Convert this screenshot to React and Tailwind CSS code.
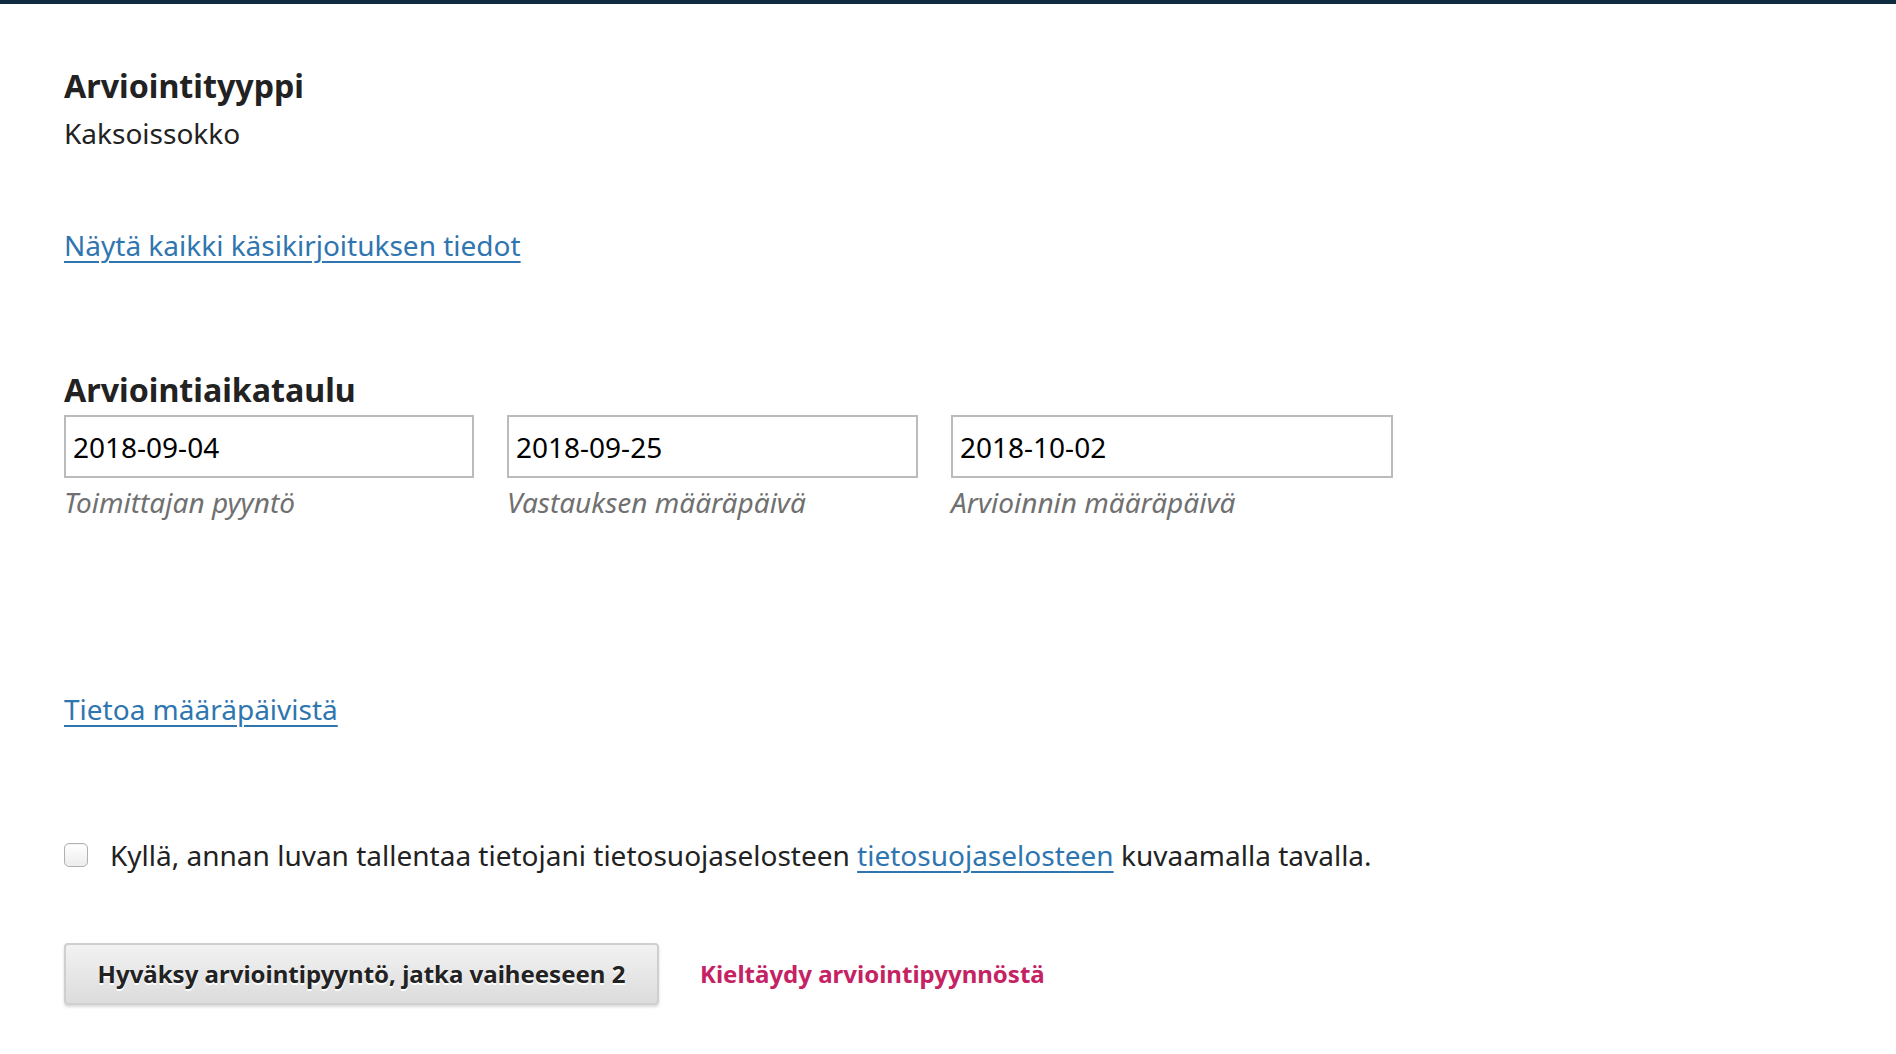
import { useState } from 'react'

const font = { fontFamily: '"Noto Sans", "Open Sans", sans-serif' }

const DATES = [
  { value: '2018-09-04', label: 'Toimittajan pyyntö', width: 'w-[410px]' },
  { value: '2018-09-25', label: 'Vastauksen määräpäivä', width: 'w-[411px]' },
  { value: '2018-10-02', label: 'Arvioinnin määräpäivä', width: 'w-[442px]' },
]

export default function App() {
  const [agree, setAgree] = useState(false)

  return (
    <div className="min-h-screen bg-white text-[#222]" style={font}>
      <div className="h-[4px] bg-[#0e2b40]" />
      <div className="px-[64px] pt-[62px]">
        <h2 className="text-[32.2px] leading-[40px] font-bold">Arviointityyppi</h2>
        <p className="text-[28px] leading-[40px] mt-[7px]">Kaksoissokko</p>

        <a href="#" className="block w-fit mt-[72px] text-[28px] leading-[40px] text-[#2f75b0] underline underline-offset-[5px] decoration-2">
          Näytä kaikki käsikirjoituksen tiedot
        </a>

        <h2 className="mt-[105px] text-[32.2px] leading-[40px] font-bold">Arviointiaikataulu</h2>
        <div className="flex gap-[33px] mt-[5px]">
          {DATES.map((d) => (
            <div key={d.value} className={d.width}>
              <div className="h-[63px] border-2 border-[#bbbbbb] flex items-center px-[7px] text-[28px] leading-[40px] text-black">
                {d.value}
              </div>
              <div className="mt-[4px] text-[28px] leading-[40px] italic text-[#707070]">{d.label}</div>
            </div>
          ))}
        </div>

        <a href="#" className="block w-fit mt-[167px] text-[28px] leading-[40px] text-[#2f75b0] underline underline-offset-[5px] decoration-2">
          Tietoa määräpäivistä
        </a>

        <label className="flex items-center mt-[106px] text-[28px] leading-[40px] cursor-pointer">
          <span
            onClick={() => setAgree(!agree)}
            className={`w-[24px] h-[24px] rounded-[5px] border border-[#b0b0b0] bg-gradient-to-b from-white to-[#ececec] shadow-[inset_0_1px_1px_rgba(0,0,0,0.05)] ${agree ? 'bg-[#2f75b0]' : ''}`}
          />
          <span className="ml-[22px]">
            Kyllä, annan luvan tallentaa tietojani tietosuojaselosteen{' '}
            <a href="#" className="text-[#2f75b0] underline underline-offset-[5px] decoration-2">tietosuojaselosteen</a>{' '}
            kuvaamalla tavalla.
          </span>
        </label>

        <div className="flex items-center mt-[68px] gap-[41px]">
          <button className="h-[62px] w-[595px] rounded-[4px] border-2 border-[#cfcfcf] bg-gradient-to-b from-[#f2f2f2] to-[#dcdcdc] shadow-[0_2px_3px_rgba(0,0,0,0.15)] text-[24px] font-bold text-[#222] [text-shadow:0_2px_0_#fff]">
            Hyväksy arviointipyyntö, jatka vaiheeseen 2
          </button>
          <a href="#" className="text-[24px] font-bold text-[#c52264]">Kieltäydy arviointipyynnöstä</a>
        </div>
      </div>
    </div>
  )
}
